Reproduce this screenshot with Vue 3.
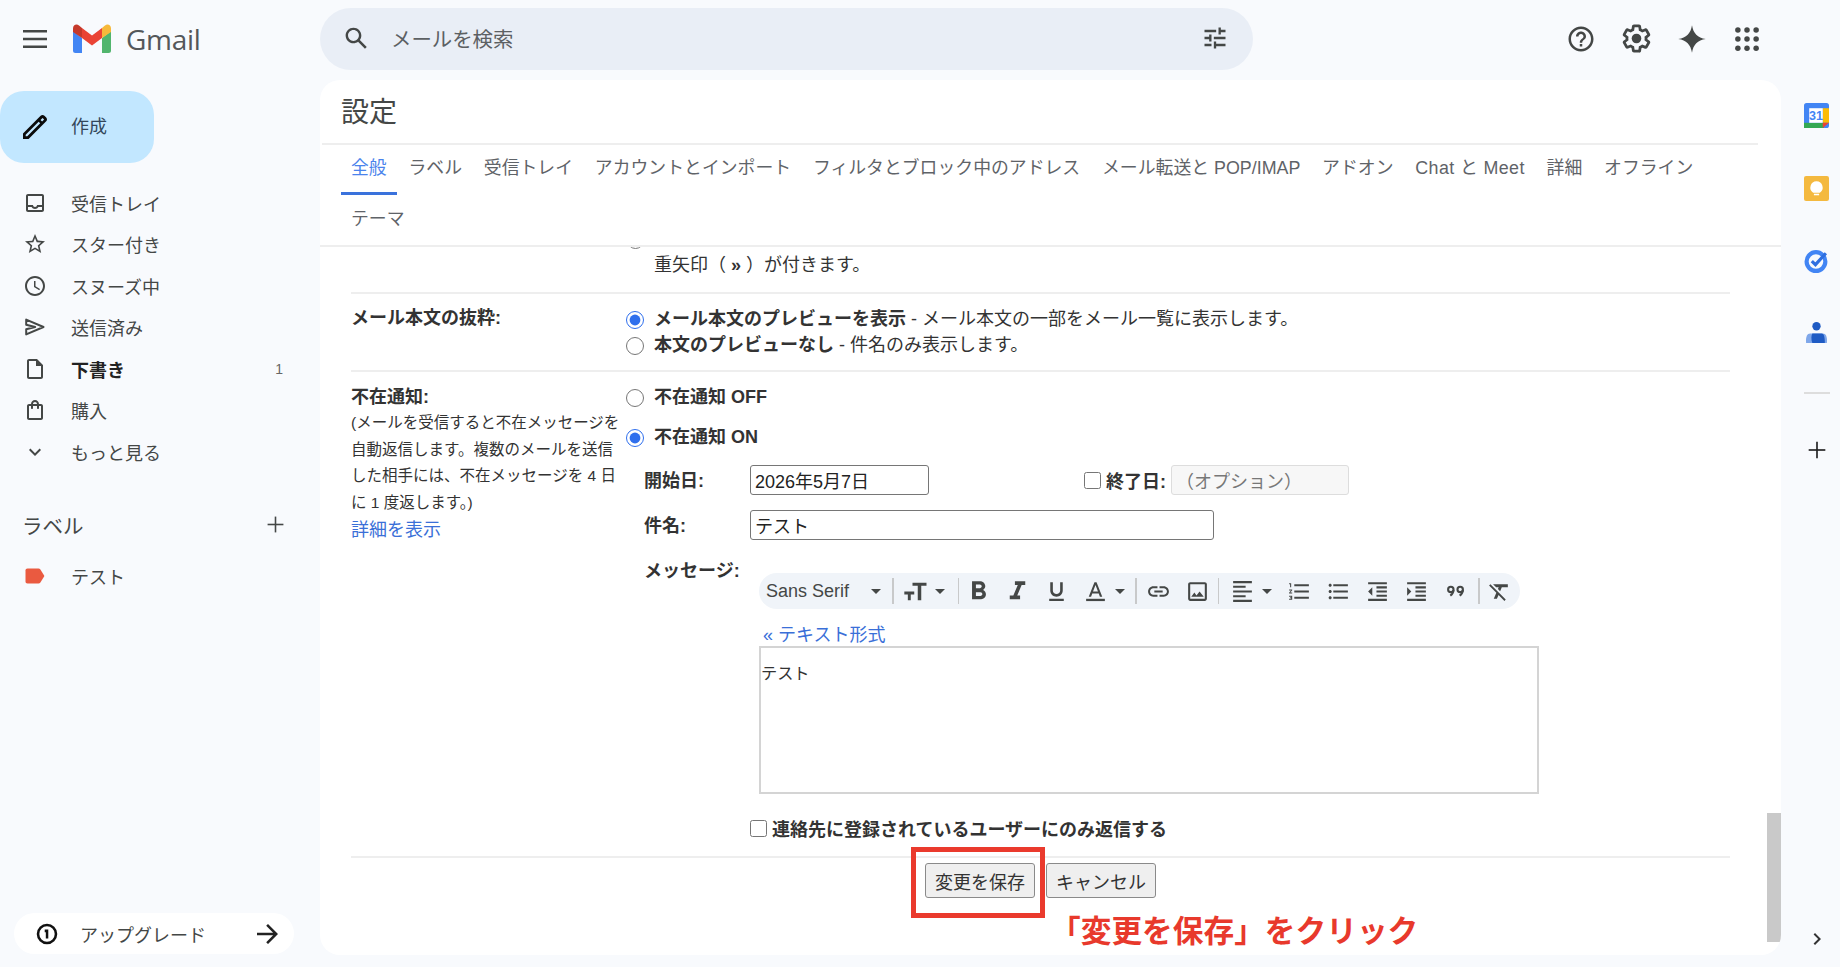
<script setup>
const navItems = [
  { label: "受信トレイ", icon: "M19 3H5c-1.1 0-2 .9-2 2v14c0 1.1.9 2 2 2h14c1.1 0 2-.9 2-2V5c0-1.1-.9-2-2-2zm0 16H5v-3h3.56c.69 1.19 1.97 2 3.45 2s2.75-.81 3.45-2H19v3zm0-5h-4.99c0 1.1-.9 2-2 2s-2-.9-2-2H5V5h14v9z" },
  { label: "スター付き", icon: "M22 9.24l-7.19-.62L12 2 9.19 8.63 2 9.24l5.46 4.73L5.82 21 12 17.27 18.18 21l-1.63-7.03L22 9.24zM12 15.4l-3.76 2.27 1-4.28-3.32-2.88 4.38-.38L12 6.1l1.71 4.04 4.38.38-3.32 2.88 1 4.28L12 15.4z" },
  { label: "スヌーズ中", icon: "M11.99 2C6.47 2 2 6.48 2 12s4.47 10 9.99 10C17.52 22 22 17.52 22 12S17.52 2 11.99 2zM12 20c-4.42 0-8-3.58-8-8s3.58-8 8-8 8 3.58 8 8-3.58 8-8 8zm.5-13H11v6l5.25 3.15.75-1.23-4.5-2.67V7z" },
  { label: "送信済み", icon: "M3.2 4.6 20.5 12 3.2 19.4v-5.2l9-2.200-9-2.200z", outline: true },
  { label: "下書き", icon: "M14 2H6c-1.1 0-1.99.9-1.99 2L4 20c0 1.1.89 2 1.99 2H18c1.1 0 2-.9 2-2V8l-6-6zm4 18H6V4h7v5h5v11z", bold: true, count: 1 },
  { label: "購入", icon: "M18 6h-2c0-2.21-1.79-4-4-4S8 3.79 8 6H6c-1.1 0-2 .9-2 2v12c0 1.1.9 2 2 2h12c1.1 0 2-.9 2-2V8c0-1.1-.9-2-2-2zm-6-2c1.1 0 2 .9 2 2h-4c0-1.1.9-2 2-2zm6 16H6V8h2v2c0 .55.45 1 1 1s1-.45 1-1V8h4v2c0 .55.45 1 1 1s1-.45 1-1V8h2v12z" },
  { label: "もっと見る", icon: "M7.41 8.59 12 13.17l4.59-4.58L18 10l-6 6-6-6z" },
];

const tabs = [
  "全般", "ラベル", "受信トレイ", "アカウントとインポート", "フィルタとブロック中のアドレス",
  "メール転送と POP/IMAP", "アドオン", "Chat と Meet", "詳細", "オフライン", "テーマ",
];

const descLines = [
  "(メールを受信すると不在メッセージを",
  "自動返信します。複数のメールを送信",
  "した相手には、不在メッセージを 4 日",
  "に 1 度返します。)",
];
</script>

<template>
  <div class="page">
    <aside class="sidebar">
      <div class="brand">
        <svg class="menu" viewBox="0 0 24 24"><path d="M0 3h24v2.4H0zM0 10.8h24v2.4H0zM0 18.6h24V21H0z" /></svg>
        <svg class="logo" viewBox="0 0 38 29">
          <path fill="#4285f4" d="M0 4v22.5A2.5 2.5 0 0 0 2.5 29H9V14L0 7z" />
          <path fill="#34a853" d="M29 29h6.500a2.500 2.500 0 0 0 2.500-2.500V7l-9 7z" fill-opacity=".85" />
          <path fill="#ea4335" d="M9 14V4l10 7.500L29 4v10l-10 7.500z" />
          <path fill="#c5392b" d="M0 4.500V8l9 6V4L6 1.500C3.500-.5 0 1 0 4.500z" />
          <path fill="#f6b93b" d="M29 4v10l9-6V4.500c0-3.500-3.500-5-6-3z" />
        </svg>
        <span class="wordmark">Gmail</span>
      </div>

      <button class="compose">
        <svg viewBox="0 0 24 24"><path d="M20.41 4.94l-1.35-1.35c-.78-.78-2.05-.78-2.83 0L3 16.82V21h4.180L20.410 7.770c.79-.78.790-2.050 0-2.830zM6.200 19H5v-1.200l9.720-9.720 1.200 1.200L6.200 19zM17.330 7.870l-1.200-1.200 1.510-1.510 1.200 1.200-1.510 1.510z" /></svg>
        <span>作成</span>
      </button>

      <nav class="nav">
        <div v-for="item in navItems" :key="item.label" class="nav-item" :class="{ bold: item.bold }">
          <svg viewBox="0 0 24 24"><path :class="{ outline: item.outline }" :d="item.icon" /></svg>
          <span class="nav-label">{{ item.label }}</span>
          <span v-if="item.count" class="nav-count">{{ item.count }}</span>
        </div>
      </nav>

      <div class="labels-head">
        <span>ラベル</span>
        <svg viewBox="0 0 24 24"><path d="M2 11h20v2H2z" /><path d="M11 2h2v20h-2z" /></svg>
      </div>
      <div class="nav-item">
        <svg class="tag" viewBox="0 0 20 16"><path d="M2.500 0.500h11c.8 0 1.400.3 1.900 1l4 6.500-4 6.500c-.5.700-1.100 1-1.900 1h-11C1.200 15.500.500 14.800.500 13.500v-11C.500 1.200 1.200.500 2.500.500z" /></svg>
        <span class="nav-label">テスト</span>
      </div>

      <div class="upgrade">
        <svg class="upgrade-badge" viewBox="0 0 24 24">
          <circle cx="12" cy="12" r="9.800" fill="none" stroke="#111" stroke-width="2.800" />
          <path d="M9.500 7.200h3.900v9.800h-2.700v-7H9.500z" fill="#111" />
        </svg>
        <span>アップグレード</span>
        <svg class="upgrade-arrow" viewBox="0 0 24 24"><path d="M12 2l-1.800 1.800 6.900 6.900H1v2.600h16.100l-6.900 6.900L12 22l10-10z" /></svg>
      </div>
    </aside>

    <div class="main">
      <header class="topbar">
        <div class="search">
          <svg class="search-icon" viewBox="0 0 24 24"><path d="M20.490 19l-5.730-5.730C15.530 12.200 16 10.910 16 9.500 16 5.910 13.090 3 9.500 3S3 5.910 3 9.500 5.910 16 9.500 16c1.410 0 2.700-.47 3.770-1.240L19 20.490 20.490 19zM5 9.500C5 7.010 7.010 5 9.500 5S14 7.010 14 9.500 11.990 14 9.500 14 5 11.990 5 9.500z" /></svg>
          <span class="search-text">メールを検索</span>
          <svg class="filter-icon" viewBox="0 0 24 24"><path d="M3 17v2h6v-2H3zM3 5v2h10V5H3zm10 16v-2h8v-2h-8v-2h-2v6h2zM7 9v2H3v2h4v2h2V9H7zm14 4v-2H11v2h10zm-6-4h2V7h4V5h-4V3h-2v6z" /></svg>
        </div>
        <div class="top-icons">
          <svg viewBox="0 0 24 24"><path d="M11 18h2v-2h-2v2zm1-16C6.480 2 2 6.480 2 12s4.480 10 10 10 10-4.480 10-10S17.520 2 12 2zm0 18c-4.410 0-8-3.590-8-8s3.590-8 8-8 8 3.590 8 8-3.590 8-8 8zm0-14c-2.210 0-4 1.790-4 4h2c0-1.100.9-2 2-2s2 .9 2 2c0 2-3 1.750-3 5h2c0-2.250 3-2.500 3-5 0-2.210-1.790-4-4-4z" /></svg>
          <svg class="gear" viewBox="0 0 24 24"><path d="M13.850 22.250h-3.700c-.74 0-1.360-.54-1.450-1.270l-.27-1.890c-.27-.14-.53-.29-.79-.46l-1.800.72c-.7.260-1.470-.03-1.810-.65L2.200 15.530c-.35-.66-.2-1.440.36-1.880l1.530-1.190c-.01-.15-.02-.3-.02-.46 0-.15.010-.31.020-.46l-1.520-1.190c-.59-.45-.74-1.260-.37-1.880l1.850-3.190c.34-.62 1.110-.9 1.790-.63l1.810.73c.26-.17.520-.32.780-.46l.27-1.910c.090-.7.710-1.250 1.440-1.250h3.700c.74 0 1.360.54 1.450 1.270l.27 1.890c.27.14.53.29.79.46l1.800-.72c.71-.26 1.480.03 1.820.65l1.840 3.180c.36.660.2 1.440-.36 1.880l-1.520 1.190c.01.150.02.3.02.46s-.01.31-.02.46l1.520 1.190c.56.450.72 1.230.37 1.860l-1.860 3.220c-.34.620-1.110.9-1.800.63l-1.800-.72c-.26.170-.52.32-.78.46l-.27 1.910c-.1.700-.72 1.250-1.450 1.250zm-3.230-2h2.760l.37-2.550.53-.22c.44-.18.880-.44 1.340-.78l.45-.34 2.380.96 1.380-2.400-2.030-1.580.07-.56c.03-.26.060-.53.060-.78s-.03-.53-.06-.78l-.07-.56 2.030-1.580-1.390-2.400-2.390.96-.45-.35c-.42-.32-.87-.58-1.330-.77l-.52-.22-.37-2.550h-2.760l-.37 2.550-.53.21c-.44.190-.88.440-1.340.790l-.45.330-2.380-.95-1.390 2.390 2.030 1.580-.07.56a7 7 0 0 0-.06.79c0 .26.020.53.060.78l.07.560-2.030 1.580 1.380 2.400 2.390-.96.450.35c.43.330.86.580 1.330.77l.53.22.38 2.550z" /><circle cx="12" cy="12" r="3.500" /></svg>
          <svg viewBox="0 0 24 24"><path d="M12 1c1 6.500 4.500 10 11 11-6.500 1-10 4.500-11 11-1-6.500-4.500-10-11-11 6.500-1 10-4.500 11-11z" /></svg>
          <svg viewBox="0 0 24 24"><circle v-for="n in 9" :key="n" :cx="4.700 + ((n - 1) % 3) * 7.300" :cy="4.700 + Math.floor((n - 1) / 3) * 7.300" r="2.200" /></svg>
        </div>
      </header>

      <main class="card">
        <h1 class="title">設定</h1>
        <div class="tabs">
          <span v-for="(tab, i) in tabs" :key="tab" class="tab" :class="{ active: i === 0, latin: i === 7 }">{{ tab }}</span>
        </div>

        <div class="settings">
          <div class="row cut-row">
            <div class="row-label"></div>
            <div class="row-body">
              <span class="cut-radio"></span>
              <div class="cut-text">重矢印（ <b>»</b> ）が付きます。</div>
            </div>
          </div>

          <div class="row preview-row">
            <div class="row-label"><b>メール本文の抜粋:</b></div>
            <div class="row-body">
              <label class="radio-line"><input type="radio" name="preview" checked /><span><b>メール本文のプレビューを表示</b> - メール本文の一部をメール一覧に表示します。</span></label>
              <label class="radio-line"><input type="radio" name="preview" /><span><b>本文のプレビューなし</b> - 件名のみ表示します。</span></label>
            </div>
          </div>

          <div class="row vacation-row">
            <div class="row-label">
              <b>不在通知:</b>
              <div class="desc">
                <div v-for="line in descLines" :key="line">{{ line }}</div>
              </div>
              <a class="link">詳細を表示</a>
            </div>
            <div class="row-body">
              <label class="radio-line off"><input type="radio" name="vacation" /><b>不在通知 OFF</b></label>
              <label class="radio-line on"><input type="radio" name="vacation" checked /><b>不在通知 ON</b></label>

              <div class="form">
                <div class="form-row date-row">
                  <b class="form-label">開始日:</b>
                  <input class="field date" type="text" value="2026年5月7日" />
                  <label class="end-date"><input type="checkbox" /><b>終了日:</b></label>
                  <input class="field optional" type="text" value="（オプション）" disabled />
                </div>
                <div class="form-row subject-row">
                  <b class="form-label">件名:</b>
                  <input class="field subject" type="text" value="テスト" />
                </div>
                <div class="form-row message-row">
                  <b class="form-label">メッセージ:</b>
                  <div class="editor">
                    <div class="toolbar">
                      <span class="font-name">Sans Serif</span>
                      <i class="caret font-caret"></i>
                      <i class="sep"></i>
                      <svg class="tb size-icon" viewBox="0 0 24 24"><path d="M9 5v2.500h4.500V20h3V7.500H21V5zM2 12.500V15h3v5h2.500v-5h3v-2.500z" /></svg>
                      <i class="caret size-caret"></i>
                      <i class="sep"></i>
                      <svg class="tb big" viewBox="0 0 24 24"><path d="M15.600 10.790c.97-.67 1.650-1.770 1.650-2.790 0-2.260-1.750-4-4-4H7v14h7.040c2.090 0 3.710-1.700 3.710-3.790 0-1.520-.86-2.820-2.150-3.420zM10 6.500h3c.83 0 1.500.67 1.500 1.500s-.67 1.500-1.500 1.500h-3v-3zm3.500 9H10v-3h3.500c.83 0 1.500.67 1.500 1.500s-.67 1.500-1.500 1.500z" /></svg>
                      <svg class="tb big" viewBox="0 0 24 24"><path d="M10 4v3h2.210l-3.420 8H6v3h8v-3h-2.210l3.420-8H18V4z" /></svg>
                      <svg class="tb" viewBox="0 0 24 24"><path d="M12 17c3.310 0 6-2.690 6-6V3h-2.500v8c0 1.930-1.570 3.500-3.500 3.500S8.500 12.930 8.500 11V3H6v8c0 3.310 2.690 6 6 6zm-7 2v2h14v-2H5z" /></svg>
                      <svg class="tb" viewBox="0 0 24 24"><path d="M11 3L5.500 17h2.250l1.120-3h6.250l1.120 3h2.250L13 3h-2zm-1.380 9L12 5.670 14.380 12H9.620z" /><path d="M3 19h18v2.200H3z" /></svg>
                      <i class="caret color-caret"></i>
                      <i class="sep sep-link"></i>
                      <svg class="tb" viewBox="0 0 24 24"><path d="M3.900 12c0-1.710 1.390-3.100 3.100-3.100h4V7H7c-2.760 0-5 2.240-5 5s2.240 5 5 5h4v-1.900H7c-1.710 0-3.100-1.390-3.100-3.100zM8 13h8v-2H8v2zm9-6h-4v1.900h4c1.710 0 3.100 1.390 3.100 3.100s-1.390 3.100-3.100 3.100h-4V17h4c2.760 0 5-2.240 5-5s-2.240-5-5-5z" /></svg>
                      <svg class="tb" viewBox="0 0 24 24"><path d="M19 3H5c-1.100 0-2 .9-2 2v14c0 1.100.9 2 2 2h14c1.100 0 2-.9 2-2V5c0-1.100-.9-2-2-2zm0 16H5V5h14v14zm-5-7l-3 3.720L9 13l-3 4h12l-4-5z" /></svg>
                      <i class="sep sep-align"></i>
                      <svg class="tb" viewBox="0 0 24 24"><path d="M3 2h18v2H3zM3 6.500h12v2H3zM3 11h18v2H3zM3 15.500h12v2H3zM3 20h18v2H3z" /></svg>
                      <i class="caret align-caret"></i>
                      <svg class="tb" viewBox="0 0 24 24"><path d="M2 17h2v.5H3v1h1v.5H2v1h3v-4H2v1zm1-9h1V4H2v1h1v3zm-1 3h1.800L2 13.100v.9h3v-1H3.200L5 10.900V10H2v1zm5-6v2h14V5H7zm0 14h14v-2H7v2zm0-6h14v-2H7v2z" /></svg>
                      <svg class="tb" viewBox="0 0 24 24"><path d="M4 10.500c-.83 0-1.500.67-1.500 1.500s.67 1.500 1.500 1.500 1.500-.67 1.500-1.500-.67-1.500-1.500-1.500zm0-6c-.83 0-1.500.67-1.500 1.500S3.170 7.500 4 7.500 5.500 6.830 5.500 6 4.830 4.500 4 4.500zm0 12c-.83 0-1.500.68-1.500 1.500s.68 1.500 1.500 1.500 1.500-.68 1.500-1.500-.67-1.500-1.500-1.500zM7 19h14v-2H7v2zm0-6h14v-2H7v2zm0-8v2h14V5H7z" /></svg>
                      <svg class="tb" viewBox="0 0 24 24"><path d="M3 21h18v-2H3v2zM3 3v2h18V3H3zm8 4h10V9H11V7zm0 4h10v2H11v-2zm0 4h10v2H11v-2zM7 8l-4 4 4 4V8z" /></svg>
                      <svg class="tb" viewBox="0 0 24 24"><path d="M3 21h18v-2H3v2zM3 3v2h18V3H3zm8 4h10V9H11V7zm0 4h10v2H11v-2zm0 4h10v2H11v-2zM3 8v8l4-4-4-4z" /></svg>
                      <svg class="tb" viewBox="0 0 24 24">
                        <g fill="none" stroke="#444746" stroke-width="2">
                          <circle cx="7.500" cy="10" r="2.600" />
                          <path d="M10 10.500c0 2.500-1 4-3 5.500" />
                          <circle cx="16.500" cy="10" r="2.600" />
                          <path d="M19 10.500c0 2.500-1 4-3 5.500" />
                        </g>
                      </svg>
                      <i class="sep sep-clear"></i>
                      <svg class="tb" viewBox="0 0 24 24"><path d="M6 5v.18L8.820 8h2.400l-.72 1.680 2.100 2.100L14.210 8H20V5H6zM3.270 5L2 6.270l6.970 6.970L6.500 19h3l1.570-3.660L16.730 21 18 19.730 3.550 5.270 3.270 5z" /></svg>
                    </div>
                    <a class="link plain-link">« テキスト形式</a>
                    <div class="body-box">テスト</div>
                  </div>
                </div>
                <label class="contacts-only"><input type="checkbox" /><b>連絡先に登録されているユーザーにのみ返信する</b></label>
              </div>
            </div>
          </div>

          <div class="actions">
            <button class="btn save">変更を保存</button>
            <button class="btn">キャンセル</button>
            <div class="callout-box"></div>
            <div class="callout-text">「変更を保存」をクリック</div>
          </div>

          <div class="scroll-thumb"></div>
        </div>
      </main>
    </div>

    <aside class="rail">
      <svg class="rail-icon" viewBox="0 0 24 24">
        <rect x="0" y="0" width="24" height="24" rx="2.500" fill="#4285f4" />
        <rect x="18" y="5" width="6" height="14" fill="#fbbc04" />
        <rect x="0" y="19" width="19" height="5" fill="#34a853" />
        <rect x="5" y="5" width="13" height="14" fill="#fff" />
        <path d="M18 24l6-5h-6z" fill="#ea4335" />
        <text x="11.500" y="16.500" text-anchor="middle" class="cal-num">31</text>
      </svg>
      <svg class="rail-icon" viewBox="0 0 24 24">
        <rect width="24" height="24" rx="2" fill="#f4b93f" />
        <path d="M12 5a6 6 0 0 0-3.200 11h6.400A6 6 0 0 0 12 5z" fill="#fff" />
        <rect x="9.500" y="17" width="5" height="1.500" fill="#fff" />
      </svg>
      <svg class="rail-icon" viewBox="0 0 24 24">
        <circle cx="11.500" cy="13" r="9" fill="none" stroke="#4285f4" stroke-width="4" />
        <path d="M7.500 12.500l3.500 3.500 10-11" fill="none" stroke="#2f6fe0" stroke-width="3" />
      </svg>
      <svg class="rail-icon" viewBox="0 0 24 24">
        <circle cx="12" cy="5" r="4" fill="#1f5bc4" />
        <path d="M6 12h12c3 0 4.500 3 4 9H2c-.5-6 1-9 4-9z" fill="#7fa7ea" />
        <path d="M8 12h9c2 0 3 3 3 9H8c-1.200-3-1.200-7 0-9z" fill="#1f5bc4" />
      </svg>
      <i class="rail-sep"></i>
      <svg class="rail-plus" viewBox="0 0 24 24"><path d="M2 11h20v2H2z" /><path d="M11 2h2v20h-2z" /></svg>
      <svg class="rail-chevron" viewBox="0 0 24 24"><path d="M8.590 16.590 13.170 12 8.590 7.410 10 6l6 6-6 6z" /></svg>
    </aside>
  </div>
</template>

<style scoped>
.page {
  display: flex;
  width: 1840px;
  height: 967px;
  background: #f8fafd;
  overflow: hidden;
  font-family: "Liberation Sans", "Noto Sans CJK JP", sans-serif;
  font-size: 18px;
  color: #222;
}

/* left column */
.sidebar {
  width: 320px;
  flex: none;
  display: flex;
  flex-direction: column;
}
.brand {
  display: flex;
  align-items: center;
  height: 80px;
  padding-left: 23px;
  margin-top: -1px;
}
.menu {
  width: 24px;
  height: 24px;
  fill: #444746;
}
.logo {
  width: 38px;
  height: 29px;
  margin-left: 26px;
  margin-top: -1px;
}
.wordmark {
  margin-left: 15px;
  font-family: "Open Sans", sans-serif;
  font-size: 28px;
  color: #54575a;
  letter-spacing: -0.3px;
}
.compose {
  display: flex;
  align-items: center;
  width: 154px;
  height: 72px;
  margin-top: 12px;
  padding: 0 0 0 19px;
  border: none;
  border-radius: 24px;
  background: #c2e7ff;
  font: inherit;
  color: #33475b;
}
.compose svg {
  width: 32px;
  height: 32px;
  fill: #0b0b0b;
  margin-bottom: 1px;
}
.compose span {
  margin: 0 0 4px 20px;
}
.nav {
  margin-top: 19px;
}
.nav-item {
  display: flex;
  align-items: center;
  height: 41.500px;
  padding-left: 23px;
  color: #444746;
}
.nav-item svg {
  width: 24px;
  height: 24px;
  flex: none;
  fill: #444746;
}
.nav-item svg .outline {
  fill: none;
  stroke: #444746;
  stroke-width: 2;
  stroke-linejoin: round;
}
.nav-label {
  margin-left: 24px;
}
.nav-item.bold {
  font-weight: 700;
  color: #222;
}
.nav-count {
  margin-left: auto;
  margin-right: 37px;
  font-size: 14px;
  font-weight: 400;
  color: #666;
}
.nav-item .tag {
  width: 20px;
  height: 16px;
  margin: 0 2px;
  fill: #ea5a40;
}
.labels-head {
  display: flex;
  align-items: center;
  justify-content: space-between;
  height: 40px;
  margin-top: 32px;
  margin-bottom: 11px;
  padding: 0 35px 0 22px;
  font-size: 20.500px;
  color: #444746;
}
.labels-head svg {
  width: 19px;
  height: 19px;
  fill: #444746;
}
.upgrade {
  display: flex;
  align-items: center;
  width: 280px;
  height: 41px;
  margin: auto 0 13px 14px;
  padding: 0 14px 0 22px;
  box-sizing: border-box;
  background: #fff;
  border-radius: 21px;
  color: #444746;
}
.upgrade-badge {
  width: 22px;
  height: 22px;
}
.upgrade span {
  margin-left: 22px;
}
.upgrade-arrow {
  width: 24px;
  height: 24px;
  margin-left: auto;
  fill: #222;
}

/* top bar and card */
.main {
  flex: none;
  width: 1461px;
  display: flex;
  flex-direction: column;
}
.topbar {
  display: flex;
  align-items: center;
  height: 62px;
  margin: 8px 0 10px;
}
.search {
  display: flex;
  align-items: center;
  width: 933px;
  height: 62px;
  padding: 0 24px 2px 22px;
  box-sizing: border-box;
  background: #e9eef6;
  border-radius: 31px;
}
.search-icon {
  width: 29px;
  height: 29px;
  fill: #444746;
}
.search-text {
  margin-left: 20px;
  font-size: 20.400px;
  color: #5c6063;
}
.filter-icon {
  width: 28px;
  height: 28px;
  margin-left: auto;
  fill: #444746;
}
.top-icons {
  display: flex;
  align-items: center;
  margin-left: 300px;
  margin-top: -1px;
}
.top-icons svg {
  width: 30px;
  height: 30px;
  margin: 0 12.750px;
  fill: #444746;
}
.top-icons svg.gear {
  width: 33px;
  height: 33px;
  margin: 0 11.250px;
}
.card {
  position: relative;
  display: flex;
  flex-direction: column;
  height: 875px;
  background: #fff;
  border-radius: 20px;
  overflow: hidden;
}
.title {
  height: 65px;
  margin: 0 23px 0 2px;
  padding-left: 19px;
  box-sizing: border-box;
  border-bottom: 2px solid #eeeeee;
  font-size: 28px;
  font-weight: 400;
  line-height: 65px;
  color: #444746;
}
.tabs {
  display: flex;
  flex-wrap: wrap;
  align-content: flex-start;
  gap: 0 1.800px;
  height: 102px;
  padding: 0 20px 0 21px;
  box-sizing: border-box;
  border-bottom: 2px solid #eeeeee;
  font-size: 17.850px;
  color: #5f6368;
}
.tab {
  height: 50px;
  padding: 0 10px;
  line-height: 46px;
  box-sizing: border-box;
  white-space: nowrap;
}
.tab.latin {
  letter-spacing: 0.4px;
}
.tab.active {
  color: #4a83ec;
  border-bottom: 3px solid #3a72dc;
}
.tab:last-child {
  height: 49px;
  line-height: 48px;
}

/* settings list */
.settings {
  position: relative;
  flex: 1;
  padding: 0 51px 0 31px;
  overflow: hidden;
  color: #333;
}
.row {
  display: flex;
  border-bottom: 2px solid #eeeeee;
}
.row-label {
  width: 275px;
  flex: none;
}
.row-body {
  flex: 1;
}
.row b {
  font-weight: 700;
}
.cut-row {
  height: 45px;
}
.cut-radio {
  display: block;
  position: absolute;
  left: 307px;
  top: -15px;
  width: 15px;
  height: 15px;
  border: 1.500px solid #777;
  border-radius: 50%;
}
.cut-text {
  padding: 6px 0 0 28px;
  line-height: 24px;
}
.preview-row {
  height: 78px;
  box-sizing: border-box;
  padding-top: 10px;
}
.radio-line {
  display: flex;
  align-items: center;
  height: 26px;
}
.radio-line input {
  width: 18px;
  height: 18px;
  margin: 6px 10px 0 0;
  flex: none;
  accent-color: #2f6fed;
}
.preview-row .row-label {
  line-height: 28px;
}
.vacation-row {
  height: 486px;
  box-sizing: border-box;
  padding-top: 12px;
}
.vacation-row .row-label {
  line-height: 26px;
}
.desc {
  font-size: 15.500px;
  line-height: 26.700px;
  color: #333;
}
.link {
  color: #3a6fd8;
}
.radio-line.off {
  margin-top: -2px;
}
.radio-line.on {
  margin-top: 14px;
}
.form {
  padding-left: 18px;
}
.form-row {
  display: flex;
  align-items: center;
}
.form-label {
  width: 106px;
  flex: none;
}
.date-row {
  margin-top: 17px;
  height: 30px;
}
.date-row .form-label,
.subject-row .form-label {
  margin-bottom: 3px;
}
.field {
  height: 30px;
  padding: 0 4px;
  box-sizing: border-box;
  border: 1.500px solid #767676;
  border-radius: 3px;
  font: inherit;
  color: #222;
  background: #fff;
}
.date {
  width: 179px;
}
.end-date {
  display: flex;
  align-items: center;
  margin-left: 155px;
}
.end-date input,
.contacts-only input {
  width: 17px;
  height: 17px;
  margin: 0 5px 0 0;
}
.optional {
  width: 178px;
  margin-left: 5px;
  border-color: #dddddd;
  background: #f7f7f7;
  color: #777;
}
.subject-row {
  margin-top: 15px;
  height: 30px;
}
.subject {
  width: 464px;
}
.message-row {
  margin-top: 16px;
  align-items: flex-start;
}
.message-row .form-label {
  line-height: 30px;
}
.editor {
  margin-left: 9px;
  width: 780px;
}
.toolbar {
  display: flex;
  align-items: center;
  width: 761px;
  height: 36px;
  margin-top: 17px;
  padding-left: 7px;
  box-sizing: border-box;
  background: #f0f4f9;
  border-radius: 18px;
  white-space: nowrap;
}
.font-name {
  width: 105px;
  font-size: 18px;
  color: #444746;
}
.caret {
  display: block;
  flex: none;
  width: 0;
  height: 0;
  border-left: 5px solid transparent;
  border-right: 5px solid transparent;
  border-top: 5px solid #444746;
}
.sep {
  flex: none;
  width: 1.500px;
  height: 26px;
  background: #c8c9ca;
}
.sep-link {
  margin-left: 1px;
  margin-right: 2px;
}
.sep-align {
  margin-left: 1px;
  margin-right: 4px;
}
.sep-clear {
  margin-left: 3px;
}
.font-caret {
  margin-right: 11px;
}
.tb {
  flex: none;
  width: 25px;
  height: 25px;
  margin: 0 7px;
  fill: #444746;
}
.tb.big {
  width: 31px;
  height: 31px;
  margin: 0 4px;
}
.size-icon {
  width: 28px;
  height: 28px;
  margin: 0 5px 0 8px;
}
.size-caret {
  margin-right: 13px;
}
.color-caret {
  margin-right: 9px;
}
.align-caret {
  margin-right: 8px;
}
.plain-link {
  display: block;
  margin: 14px 0 -1px 4px;
  line-height: 24px;
}
.body-box {
  height: 148px;
  box-sizing: border-box;
  padding: 13px 0;
  border: 2px solid #d4d4d4;
  font-size: 16.200px;
  line-height: 24px;
  color: #333;
}
.contacts-only {
  display: flex;
  align-items: center;
  height: 24px;
  margin: 22px 0 0 106px;
}
.actions {
  position: relative;
  display: flex;
  justify-content: center;
  gap: 11px;
  padding-top: 5px;
}
.btn {
  height: 35px;
  padding: 0 9px;
  border: 1.500px solid #8a8a8a;
  border-radius: 3px;
  background: #efefef;
  font: inherit;
  color: #333;
}
.callout-box {
  position: absolute;
  left: 560px;
  top: -11px;
  width: 134px;
  height: 71px;
  box-sizing: border-box;
  border: 5px solid #ea3a2d;
}
.callout-text {
  position: absolute;
  left: 699px;
  top: 55px;
  font-size: 30.700px;
  font-weight: 700;
  line-height: 38px;
  color: #e8392c;
  white-space: nowrap;
}
.scroll-thumb {
  position: absolute;
  right: 0;
  top: 566px;
  width: 14px;
  height: 129px;
  background: #c9c9c9;
}

/* right rail */
.rail {
  flex: 1;
  display: flex;
  flex-direction: column;
  align-items: center;
  padding: 103px 0 0 12px;
  position: relative;
}
.rail-icon {
  width: 25px;
  height: 25px;
  margin-bottom: 47.500px;
}
.cal-num {
  font-family: "Liberation Sans", sans-serif;
  font-size: 12px;
  font-weight: 700;
  fill: #4285f4;
}
.rail-sep {
  display: block;
  width: 26px;
  height: 1.500px;
  background: #dddddd;
  margin-top: -1px;
}
.rail-plus {
  width: 20px;
  height: 20px;
  margin-top: 46px;
  fill: #222;
}
.rail-chevron {
  position: absolute;
  top: 927px;
  left: 24px;
  width: 24px;
  height: 24px;
  fill: #333;
}
</style>

<style>
html,
body {
  background: #fff;
}
</style>
